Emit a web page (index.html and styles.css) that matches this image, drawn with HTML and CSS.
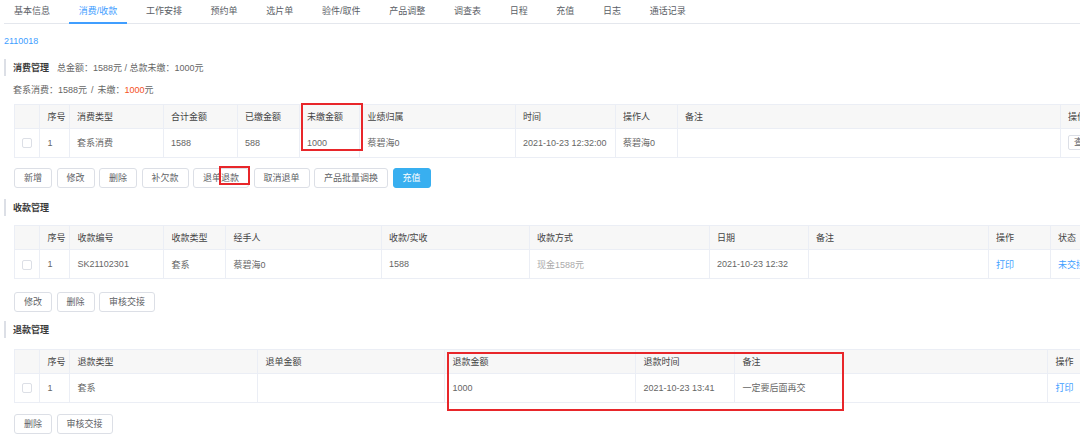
FILE: index.html
```html
<!DOCTYPE html>
<html lang="zh-CN">
<head>
<meta charset="utf-8">
<title>消费/收款</title>
<link rel="stylesheet" href="styles.css">
</head>
<body>
<div class="page">
  <nav class="tabs">
    <span class="tab">基本信息</span>
    <span class="tab active">消费/收款</span>
    <span class="tab">工作安排</span>
    <span class="tab">预约单</span>
    <span class="tab">选片单</span>
    <span class="tab">验件/取件</span>
    <span class="tab">产品调整</span>
    <span class="tab">调查表</span>
    <span class="tab">日程</span>
    <span class="tab">充值</span>
    <span class="tab">日志</span>
    <span class="tab">通话记录</span>
  </nav>

  <div class="order-no">2110018</div>

  <div class="sec-title sec-consume"><b>消费管理</b><span class="sum">总金额：1588元 / 总款未缴：1000元</span></div>
  <div class="sum-line">套系消费：1588元<span class="sep">/</span>未缴：<span class="red">1000</span>元</div>

  <table class="tbl tbl-consume">
    <colgroup>
      <col class="w25"><col class="w29"><col class="w94"><col class="w74"><col class="w62"><col class="w61"><col class="w155"><col class="w100"><col class="w62"><col class="w383"><col>
    </colgroup>
    <thead>
      <tr><th></th><th>序号</th><th>消费类型</th><th>合计金额</th><th>已缴金额</th><th>未缴金额</th><th>业绩归属</th><th>时间</th><th>操作人</th><th>备注</th><th>操作</th></tr>
    </thead>
    <tbody>
      <tr><td class="cbc"><span class="cb"></span></td><td>1</td><td>套系消费</td><td>1588</td><td>588</td><td>1000</td><td>蔡碧海0</td><td>2021-10-23 12:32:00</td><td>蔡碧海0</td><td></td><td><span class="btn-sm">查看</span></td></tr>
    </tbody>
  </table>

  <div class="btns btns-consume">
    <button class="btn">新增</button>
    <button class="btn">修改</button>
    <button class="btn">删除</button>
    <button class="btn">补欠款</button>
    <button class="btn">退单退款</button>
    <button class="btn">取消退单</button>
    <button class="btn">产品批量调换</button>
    <button class="btn primary">充值</button>
  </div>

  <div class="sec-title sec-receipt"><b>收款管理</b></div>

  <table class="tbl tbl-receipt">
    <colgroup>
      <col class="w25"><col class="w30"><col class="w94"><col class="w62"><col class="w155"><col class="w148"><col class="w180"><col class="w99"><col class="w180"><col class="w62"><col>
    </colgroup>
    <thead>
      <tr><th></th><th>序号</th><th>收款编号</th><th>收款类型</th><th>经手人</th><th>收款/实收</th><th>收款方式</th><th>日期</th><th>备注</th><th>操作</th><th>状态</th></tr>
    </thead>
    <tbody>
      <tr><td class="cbc"><span class="cb"></span></td><td>1</td><td>SK21102301</td><td>套系</td><td>蔡碧海0</td><td>1588</td><td class="muted">现金1588元</td><td>2021-10-23 12:32</td><td></td><td class="link">打印</td><td class="link">未交接</td></tr>
    </tbody>
  </table>

  <div class="btns btns-receipt">
    <button class="btn">修改</button>
    <button class="btn">删除</button>
    <button class="btn">审核交接</button>
  </div>

  <div class="sec-title sec-refund"><b>退款管理</b></div>

  <table class="tbl tbl-refund">
    <colgroup>
      <col class="w25"><col class="w30"><col class="w188"><col class="w187"><col class="w191"><col class="w99"><col class="w313"><col>
    </colgroup>
    <thead>
      <tr><th></th><th>序号</th><th>退款类型</th><th>退单金额</th><th>退款金额</th><th>退款时间</th><th>备注</th><th>操作</th></tr>
    </thead>
    <tbody>
      <tr><td class="cbc"><span class="cb"></span></td><td>1</td><td>套系</td><td></td><td>1000</td><td>2021-10-23 13:41</td><td>一定要后面再交</td><td class="link">打印</td></tr>
    </tbody>
  </table>

  <div class="btns btns-refund">
    <button class="btn">删除</button>
    <button class="btn">审核交接</button>
  </div>

  <div class="mark mark-owed"></div>
  <div class="mark mark-refund-btn"></div>
  <div class="mark mark-refund-area"></div>
</div>
</body>
</html>
```
FILE: styles.css
```css
* { box-sizing: border-box; }

html, body {
  margin: 0;
  padding: 0;
  background: #fff;
}

body {
  font-family: "Liberation Sans", "Noto Sans CJK SC", sans-serif;
  font-size: 9px;
  color: #606266;
}

.page {
  position: relative;
  width: 1080px;
  height: 435px;
  overflow: hidden;
  padding-left: 4px;
}

/* tabs */
.tabs {
  display: flex;
  gap: 8.7px;
  height: 24px;
  border-bottom: 1px solid #e4e7ed;
}

.tab {
  position: relative;
  padding: 0 10px;
  line-height: 23px;
  color: #5a5e66;
  white-space: nowrap;
}

.tab.active { color: #409eff; }

.tab.active::after {
  content: "";
  position: absolute;
  left: 0;
  right: 0;
  bottom: -1px;
  height: 2px;
  background: #409eff;
}

.order-no {
  margin-top: 10px;
  height: 14px;
  line-height: 14px;
  color: #409eff;
}

/* section titles */
.sec-title {
  display: flex;
  align-items: center;
  height: 17px;
  border-left: 2px solid #dcdfe6;
  padding-left: 7px;
}

.sec-title b {
  color: #3a3a3a;
  font-weight: 600;
}

.sec-title .sum {
  margin-left: 8px;
  color: #666;
}

.sep { margin: 0 1.5px; padding: 0 2.5px; }

.sum-line {
  margin-top: 7.7px;
  height: 14px;
  line-height: 14px;
  padding-left: 9px;
  color: #666;
}

.red { color: #f4511e; }

/* tables */
.tbl {
  margin-left: 10px;
  width: 1119px;
  table-layout: fixed;
  border-collapse: collapse;
  border: 1px solid #ebeef5;
}

.w25 { width: 25px; }
.w29 { width: 29.5px; }
.w30 { width: 30px; }
.w61 { width: 60.5px; }
.w62 { width: 62px; }
.w74 { width: 74px; }
.w94 { width: 94px; }
.w99 { width: 99px; }
.w100 { width: 100px; }
.w148 { width: 148px; }
.w155 { width: 155.5px; }
.w180 { width: 180px; }
.w187 { width: 187px; }
.w188 { width: 188px; }
.w191 { width: 191px; }
.w313 { width: 313px; }
.w383 { width: 383px; }

.tbl th {
  height: 24px;
  padding: 0 7.5px;
  background: #f7f7f7;
  color: #444;
  font-weight: normal;
  text-align: left;
  white-space: nowrap;
  overflow: hidden;
  border: 1px solid #ebeef5;
}

.tbl td {
  height: 29px;
  padding: 0 7.5px;
  color: #666;
  white-space: nowrap;
  overflow: hidden;
  border: 1px solid #ebeef5;
}

.tbl td.cbc {
  padding: 0;
  text-align: center;
}

.cb {
  display: inline-block;
  width: 10px;
  height: 10px;
  border: 1px solid #dcdfe6;
  border-radius: 2px;
  background: #fff;
  vertical-align: middle;
}

.tbl td.muted { color: #aaa; }
.tbl td.link { color: #409eff; }

.btn-sm {
  display: inline-block;
  height: 15px;
  line-height: 13px;
  padding: 0 5px;
  border: 1px solid #dcdfe6;
  border-radius: 2px;
  color: #606266;
  vertical-align: middle;
}

.tbl-consume { margin-top: 6.4px; }
.tbl-receipt { margin-top: 9.2px; }
.tbl-refund { margin-top: 11px; }

/* buttons */
.btns {
  display: flex;
  gap: 4.5px;
  margin-left: 10px;
}

.btn {
  height: 20px;
  padding: 0 9px;
  border: 1px solid #dcdfe6;
  border-radius: 3px;
  background: #fff;
  color: #606266;
  font: inherit;
  line-height: 18px;
  white-space: nowrap;
}

.btn.primary {
  background: #38aff0;
  border-color: #38aff0;
  color: #fff;
}

.btns-consume { margin-top: 10px; }
.btns-receipt { margin-top: 13px; }
.btns-refund { margin-top: 11px; }

.sec-consume { margin-top: 10.5px; }
.sec-receipt { margin-top: 11.5px; }
.sec-refund { margin-top: 8.5px; }

/* annotation boxes drawn over the screenshot */
.mark {
  position: absolute;
  border: 2px solid #e8262a;
  pointer-events: none;
}

.mark-owed { left: 301px; top: 103px; width: 62px; height: 48px; }
.mark-refund-btn { left: 219px; top: 166px; width: 31px; height: 19px; }
.mark-refund-area { left: 447px; top: 352px; width: 397px; height: 59px; }
```
